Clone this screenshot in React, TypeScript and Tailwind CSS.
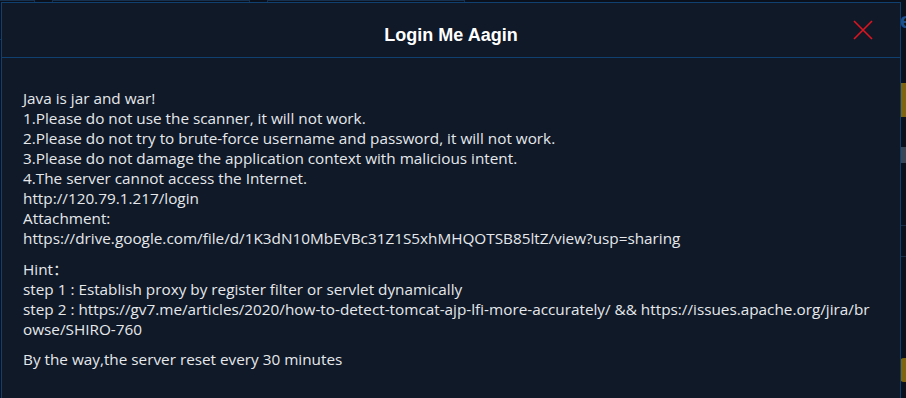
import React from 'react';

const body = '"Open Sans", "Noto Sans", "Noto Sans CJK SC", sans-serif';

export default function App() {
  return (
    <div className="relative w-[906px] h-[398px] overflow-hidden bg-[#0a111c]">
      {/* page behind the modal */}
      <div className="flex h-full">
        <div className="flex-1 flex gap-[17px] ml-[-163px] pt-0">
          <div className="w-[198px] h-[40px] border border-[#16304d]" />
          <div className="w-[198px] h-[40px] border border-[#16304d]" />
          <div className="w-[198px] h-[40px] border border-[#16304d]" />
        </div>
        <div className="w-[6px] flex flex-col">
          <div className="mt-[12px] h-[18px] text-[22px] leading-[18px] font-bold text-[#1c4f8c]" style={{ fontFamily: '"Liberation Sans", sans-serif' }}>e</div>
          <div className="mt-[53px] h-[34px] bg-[#7d6410]" />
          <div className="mt-[30px] ml-[1px] h-[16px] bg-[#3a4556]" />
          <div className="mt-[62px] h-[1px] bg-[#1a2d44]" />
          <div className="mt-[30px] h-[1px] bg-[#1a2d44]" />
          <div className="mt-[101px] h-[24px] bg-[#7d6410] rounded-l-[4px]" />
        </div>
      </div>

      {/* modal */}
      <div className="absolute left-[1px] top-[2px] w-[900px] h-[420px] bg-[#0f1928] border border-[#0f4070]">
        <div className="relative h-[55px] border-b border-[#0f4070] flex items-center justify-center pt-[10px]">
          <h2 className="text-[18px] font-bold text-white" style={{ fontFamily: '"Liberation Sans", Arial, sans-serif' }}>
            Login Me Aagin
          </h2>
          <button className="absolute right-[27px] top-[17px] w-[20px] h-[20px] text-[#e0141e]">
            <svg viewBox="0 0 20 20" width="20" height="20" fill="none" stroke="currentColor" strokeWidth="1.6">
              <path d="M1 1L19 19M19 1L1 19" />
            </svg>
          </button>
        </div>
        <div className="pl-[21px] pr-[26px] pt-[30px] text-[15.3px] leading-[20px] text-[#e6e8eb] break-all" style={{ fontFamily: body }}>
          <p>
            Java is jar and war!<br />
            1.Please do not use the scanner, it will not work.<br />
            2.Please do not try to brute-force username and password, it will not work.<br />
            3.Please do not damage the application context with malicious intent.<br />
            4.The server cannot access the Internet.<br />
            http://120.79.1.217/login<br />
            Attachment:<br />
            https://drive.google.com/file/d/1K3dN10MbEVBc31Z1S5xhMHQOTSB85ltZ/view?usp=sharing
          </p>
          <p className="mt-[10px]">
            Hint<span style={{ fontFamily: '"Noto Sans CJK SC", sans-serif' }}>：</span><br />
            step 1 : Establish proxy by register filter or servlet dynamically<br />
            step 2 : https://gv7.me/articles/2020/how-to-detect-tomcat-ajp-lfi-more-accurately/ &amp;&amp; https://issues.apache.org/jira/browse/SHIRO-760
          </p>
          <p className="mt-[10px]">By the way,the server reset every 30 minutes</p>
        </div>
      </div>
    </div>
  );
}
